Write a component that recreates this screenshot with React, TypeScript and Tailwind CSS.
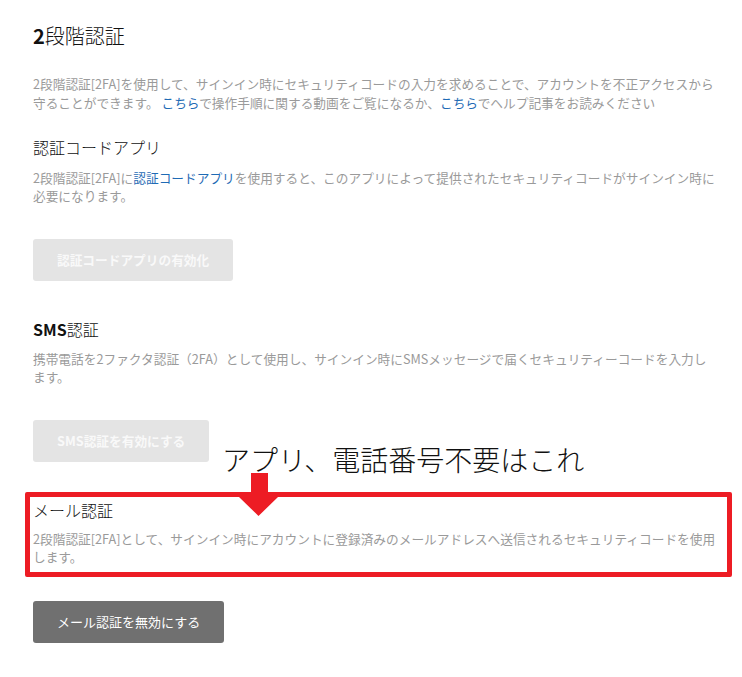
import React from 'react'

const font = { fontFamily: '"Noto Sans CJK JP", "Noto Sans", sans-serif' }

function Link({ children }: { children: React.ReactNode }) {
  return <span className="text-[#1f6bb5]">{children}</span>
}

function DisabledButton({ label }: { label: string }) {
  return (
    <button
      type="button"
      disabled
      className="flex h-[42px] items-center rounded-[3px] bg-[#e4e4e4] px-6 text-[12.7px] font-bold text-[#f9f9f9]"
    >
      {label}
    </button>
  )
}

export default function App() {
  return (
    <div className="min-h-screen bg-white" style={font}>
      <div className="flex w-[720px] flex-col items-start pl-[33px] pt-[22px]">
        <h1 className="text-[20px] leading-[28px] font-light text-[#111]">
          <span className="font-bold">2</span>段階認証
        </h1>

        <p className="mt-6 text-[12.7px] leading-[19px] whitespace-nowrap text-[#9a9a9a]">
          2段階認証[2FA]を使用して、サインイン時にセキュリティコードの入力を求めることで、アカウントを不正アクセスから
          <br />
          守ることができます。 <Link>こちら</Link>で操作手順に関する動画をご覧になるか、<Link>こちら</Link>
          でヘルプ記事をお読みください
        </p>

        <h2 className="mt-[23px] text-[16px] leading-[24px] font-light text-[#111]">認証コードアプリ</h2>
        <p className="mt-[10px] text-[12.7px] leading-[18px] whitespace-nowrap text-[#9a9a9a]">
          2段階認証[2FA]に<Link>認証コードアプリ</Link>
          を使用すると、このアプリによって提供されたセキュリティコードがサインイン時に
          <br />
          必要になります。
        </p>
        <div className="mt-[34px]">
          <DisabledButton label="認証コードアプリの有効化" />
        </div>

        <h2 className="mt-9 text-[16px] leading-[24px] font-light text-[#111]">
          <span className="font-bold">SMS</span>認証
        </h2>
        <p className="mt-[9px] text-[12.7px] leading-[18px] whitespace-nowrap text-[#9a9a9a]">
          携帯電話を2ファクタ認証（2FA）として使用し、サインイン時にSMSメッセージで届くセキュリティーコードを入力し
          <br />
          ます。
        </p>
        <div className="mt-[34px]">
          <DisabledButton label="SMS認証を有効にする" />
        </div>

        <div className="relative -ml-2 mt-[30px] w-[707px] rounded-[2px] border-[5px] border-[#ed1c24] pb-[6px] pl-[3px] pt-px">
          <div className="absolute left-[192px] top-[-56px] text-[28px] leading-[36px] font-light whitespace-nowrap text-[#111]">
            アプリ、電話番号不要はこれ
          </div>
          <svg
            className="absolute left-[209px] top-[-24px] z-10"
            width="40"
            height="44"
            viewBox="0 0 40 44"
          >
            <polygon points="12,0 29,0 29,24 39,24 19.5,43 0,24 12,24" fill="#ed1c24" />
          </svg>
          <h2 className="text-[16px] leading-[24px] font-light text-[#111]">メール認証</h2>
          <p className="mt-2 text-[12.7px] leading-[18px] whitespace-nowrap text-[#9a9a9a]">
            2段階認証[2FA]として、サインイン時にアカウントに登録済みのメールアドレスへ送信されるセキュリティコードを使用
            <br />
            します。
          </p>
        </div>

        <button
          type="button"
          className="mt-6 flex h-[42px] items-center rounded-[3px] bg-[#707070] px-6 text-[13px] text-white"
        >
          メール認証を無効にする
        </button>
      </div>
    </div>
  )
}
